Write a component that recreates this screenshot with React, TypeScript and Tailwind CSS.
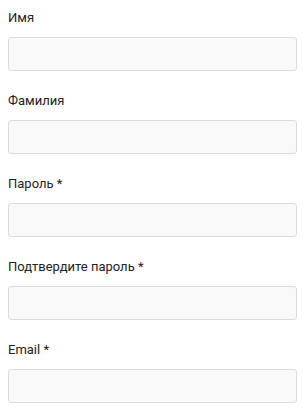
import React from 'react';

const fields = [
  { label: 'Имя', type: 'text' },
  { label: 'Фамилия', type: 'text' },
  { label: 'Пароль *', type: 'password' },
  { label: 'Подтвердите пароль *', type: 'password' },
  { label: 'Email *', type: 'email' },
];

export default function App() {
  return (
    <div className="w-[303px] h-[416px] bg-white overflow-hidden pl-2 pr-[6px] pt-[9px] font-['Roboto',sans-serif]">
      {fields.map((f) => (
        <div key={f.label} className="mb-[21px]">
          <label className="block text-[13px] leading-[18px] text-[#222] mb-[10px]">{f.label}</label>
          <input
            type={f.type}
            className="block w-full h-[34px] bg-[#f9f9f9] border border-[#dcdcdc] rounded-[3px] outline-none"
          />
        </div>
      ))}
    </div>
  );
}
